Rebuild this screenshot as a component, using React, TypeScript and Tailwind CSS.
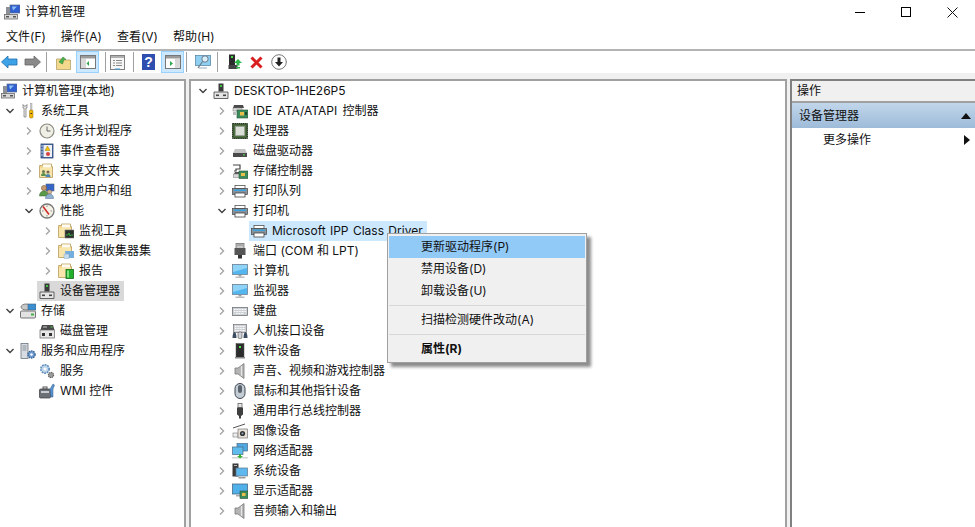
import React from "react";

type IconName =
  | "computer" | "tools" | "clock" | "log" | "share" | "users" | "gauge" | "monitorFolder" | "dataFolder" | "reportFolder"
  | "device" | "storage" | "disk" | "services" | "gears" | "wmi" | "ide" | "cpu" | "drive" | "storageCtl" | "printer"
  | "port" | "screen" | "keyboard" | "hid" | "software" | "speaker" | "mouse" | "usb" | "camera" | "network" | "system" | "display";

function Icon({ name }: { name: IconName }) {
  return (
    <svg width="16" height="16" viewBox="0 0 16 16" className="shrink-0">
      {drawIcon(name)}
    </svg>
  );
}

function Folder({ children }: { children?: React.ReactNode }) {
  return (
    <>
      <path d="M.5 3.5V2.500h3V1h9v2.500h1v11H.5z" fill="#f3d78f" stroke="#b89c60" strokeWidth=".8" />
      <path d="M4 1.500h8v3H4z" fill="#fdfbf2" />
      <path d="M1 5h12v9H1z" fill="#f8e6ac" />
      {children}
    </>
  );
}

function drawIcon(name: IconName) {
  switch (name) {
    case "computer":
      return (
        <>
          <rect x="6" y="1" width="10" height="8" fill="#2f5fd0" stroke="#5b6b8a" strokeWidth=".7" />
          <path d="M8 2.500l5 0-4 4z" fill="#8fc0f2" />
          <rect x="2" y="3" width="4" height="8" fill="#8a8f98" />
          <rect x=".5" y="10.500" width="13" height="4.500" fill="#d8d8d8" stroke="#6a6a6a" strokeWidth=".8" />
          <rect x="2" y="12" width="3" height="1.500" fill="#555" />
          <rect x="9" y="12" width="3" height="1.500" fill="#555" />
        </>
      );
    case "tools":
      return (
        <>
          <path d="M3 1.500v3.500h1v9h2v-9h1v-3.500l-1 1.500h-2z" fill="#e9e9e9" stroke="#777" strokeWidth=".7" />
          <rect x="10.500" y=".5" width="1.500" height="7" fill="#cfcfcf" stroke="#888" strokeWidth=".4" />
          <rect x="9.500" y="7" width="3.500" height="8" rx="1.200" fill="#f2b705" stroke="#8a6a00" strokeWidth=".5" />
          <rect x="10.500" y="10" width="1.500" height="1" fill="#333" />
        </>
      );
    case "clock":
      return (
        <>
          <circle cx="8" cy="8" r="7" fill="#efefe6" stroke="#8a8a80" strokeWidth="1.200" />
          <path d="M8 3.500V8h3.500" fill="none" stroke="#666" strokeWidth="1" />
        </>
      );
    case "log":
      return (
        <>
          <rect x="2" y="1" width="12" height="14" fill="#4a6fa8" stroke="#2c4470" strokeWidth=".8" />
          <rect x="4.500" y="2" width="8.500" height="12" fill="#eef0f4" />
          <path d="M8.500 3l2.500 4.500H6z" fill="#f2c200" stroke="#8a7000" strokeWidth=".4" />
          <circle cx="9" cy="11" r="2" fill="#d84040" />
          <path d="M2 3h2M2 6h2M2 9h2M2 12h2" stroke="#dfe6f0" strokeWidth=".8" />
        </>
      );
    case "share":
      return (
        <Folder>
          <circle cx="4.500" cy="8.500" r="1.600" fill="#6f7f55" />
          <path d="M2 13c0-2 1-3 2.500-3s2.500 1 2.500 3z" fill="#5f8f4f" />
          <circle cx="9" cy="9" r="1.600" fill="#7a6a55" />
          <path d="M6.500 14c0-2 1-3 2.500-3s2.500 1 2.500 3z" fill="#4f86b8" />
        </Folder>
      );
    case "users":
      return (
        <>
          <rect x="7" y="1" width="8" height="7" fill="#3565c8" stroke="#506080" strokeWidth=".6" />
          <circle cx="5" cy="5" r="2.600" fill="#c99a70" stroke="#6a4a30" strokeWidth=".5" />
          <path d="M.5 13c0-3.500 2-5 4.500-5s4.500 1.500 4.500 5z" fill="#5a9a48" stroke="#3a6a30" strokeWidth=".5" />
          <circle cx="10.500" cy="9" r="2.200" fill="#d0b090" stroke="#6a4a30" strokeWidth=".4" />
          <path d="M6.500 15.500c0-3 1.500-4.500 4-4.500s4 1.500 4 4.500z" fill="#8fb0d0" stroke="#50708f" strokeWidth=".5" />
        </>
      );
    case "gauge":
      return (
        <>
          <circle cx="8" cy="8" r="7" fill="#f4f1e6" stroke="#777" strokeWidth="1.300" />
          <path d="M4 3.500l6 8" stroke="#d02a2a" strokeWidth="1.500" />
          <path d="M8 2.500v1.500M13 8h-1.500M3 8h1.500M8 12v1.500" stroke="#777" strokeWidth=".8" />
        </>
      );
    case "monitorFolder":
      return (
        <Folder>
          <rect x="7" y="7" width="9" height="8" fill="#2b2f2a" stroke="#777" strokeWidth=".6" />
          <path d="M8 12h2l1-2 1 3 1-1h2" fill="none" stroke="#3fc04a" strokeWidth=".8" />
        </Folder>
      );
    case "dataFolder":
      return (
        <Folder>
          <path d="M7 8h9v7H8z" fill="#74aede" />
          <path d="M6 11h5v4.500H6z" fill="#c4dcf0" stroke="#7a9ab8" strokeWidth=".4" />
        </Folder>
      );
    case "reportFolder":
      return (
        <Folder>
          <rect x="8" y="6.500" width="7.500" height="9" fill="#22b02c" stroke="#136a18" strokeWidth=".8" />
          <rect x="9" y="7.500" width="2" height="7" fill="#7fe07f" />
        </Folder>
      );
    case "device":
      return (
        <>
          <rect x="5.500" y=".5" width="5" height="8" fill="#3a3a3a" />
          <rect x="7" y="2" width="2" height="2" fill="#43c043" />
          <path d="M1 9h14v6.500H1z" fill="#e4e4e4" stroke="#555" strokeWidth=".9" />
          <rect x="3" y="11.500" width="3" height="1.600" fill="#444" />
          <rect x="10" y="11.500" width="3" height="1.600" fill="#444" />
        </>
      );
    case "storage":
      return (
        <>
          <ellipse cx="6" cy="4" rx="5" ry="3" fill="#c8c8c8" stroke="#666" strokeWidth=".8" />
          <rect x="8" y="1" width="8" height="6" fill="#3a8fd0" stroke="#46627a" strokeWidth=".6" />
          <rect x=".5" y="8" width="15" height="7" rx="1" fill="#e2e2e2" stroke="#666" strokeWidth=".9" />
          <rect x="11" y="10.500" width="3" height="2" fill="#46b246" />
        </>
      );
    case "disk":
      return (
        <>
          <path d="M3 2h11l1.500 5H1.500z" fill="#4a4a4a" />
          <path d="M4 3h4v2H4z" fill="#8a8a8a" />
          <rect x="11.500" y="3.500" width="2" height="1" fill="#52d052" />
          <rect x="1" y="7" width="14.500" height="8" fill="#e8e8e8" stroke="#666" strokeWidth=".7" />
          <rect x="3" y="10" width="3" height="3" fill="#333" />
          <rect x="10" y="10" width="3" height="3" fill="#333" />
        </>
      );
    case "services":
      return (
        <>
          <rect x="1" y=".5" width="7" height="15" fill="#d7dce2" stroke="#6b7480" strokeWidth=".8" />
          <path d="M2.500 3h4M2.500 5h4M2.500 7h4" stroke="#6b7480" strokeWidth=".7" />
          <circle cx="11.500" cy="11.500" r="3.600" fill="#6a9ad0" stroke="#3a5f8c" strokeWidth="1.300" strokeDasharray="1.500 .8" />
          <circle cx="11.500" cy="11.500" r="1.200" fill="#fff" />
        </>
      );
    case "gears":
      return (
        <>
          <circle cx="6" cy="6" r="4.200" fill="#bcd4ea" stroke="#5a8ab8" strokeWidth="1.600" strokeDasharray="1.800 .9" />
          <circle cx="6" cy="6" r="1.600" fill="#fff" />
          <circle cx="12" cy="12" r="2.600" fill="#9a9a9a" stroke="#5e5e5e" strokeWidth="1.200" strokeDasharray="1.300 .7" />
        </>
      );
    case "wmi":
      return (
        <>
          <rect x=".5" y="6" width="11" height="9" rx="1" fill="#6a6f76" stroke="#3a3d42" strokeWidth=".7" />
          <rect x="2" y="8" width="8" height="2" fill="#c8ccd0" />
          <rect x="4" y="4" width="4" height="2" fill="none" stroke="#555" />
          <path d="M11 6l3-5 1.500 1-1.500 4v8h-2z" fill="#5a94d0" stroke="#2e5a8a" strokeWidth=".5" />
        </>
      );
    case "ide":
      return (
        <>
          <path d="M2 2h9l1 3H1z" fill="#4a4a4a" />
          <rect x="1" y="5" width="9" height="3" fill="#dcdcdc" stroke="#777" strokeWidth=".5" />
          <rect x="5" y="7" width="11" height="8" fill="#3d8a5a" stroke="#25583a" strokeWidth=".6" />
          <rect x="8" y="9" width="4" height="3.500" fill="#e8c04a" />
          <rect x="13" y="9" width="2" height="3" fill="#1f4a30" />
          <rect x="1" y="9" width="3" height="3" fill="#bbb" />
        </>
      );
    case "cpu":
      return (
        <>
          <rect x=".5" y=".5" width="15" height="15" fill="#3f5a34" stroke="#26351f" strokeWidth="1" strokeDasharray="1.500 .6" />
          <rect x="2" y="2" width="12" height="12" fill="#4f7040" />
          <rect x="3.500" y="3.500" width="9" height="9" fill="#dcdfd8" stroke="#9aa09a" strokeWidth=".6" />
        </>
      );
    case "drive":
      return (
        <>
          <path d="M3 6h10l2 4H1z" fill="#c4c4c4" />
          <rect x="1" y="10" width="14" height="4" fill="#4a4a4a" />
          <rect x="11" y="11.300" width="2" height="1.200" fill="#55cc55" />
        </>
      );
    case "storageCtl":
      return (
        <>
          <path d="M1 2h7v4H4v2H2" fill="none" stroke="#444" strokeWidth="1.200" />
          <path d="M3 9h5l1 2H2z" fill="#555" />
          <rect x="1.500" y="11" width="6" height="3.500" fill="#d8d8d8" stroke="#777" strokeWidth=".5" />
          <rect x="7" y="8" width="9" height="7.500" fill="#3d8a5a" stroke="#25583a" strokeWidth=".6" />
          <rect x="9" y="10" width="4" height="3" fill="#e8c04a" />
        </>
      );
    case "printer":
      return (
        <>
          <rect x="3" y="2.500" width="10" height="3" fill="#fff" stroke="#555" strokeWidth=".8" />
          <rect x=".5" y="5.500" width="15" height="6" fill="#8a929a" stroke="#444" strokeWidth=".7" />
          <rect x="2" y="6.500" width="12" height="1.500" fill="#39a0e0" />
          <rect x="3" y="10" width="10" height="4" fill="#fff" stroke="#444" strokeWidth=".8" />
        </>
      );
    case "port":
      return (
        <>
          <rect x="4" y=".5" width="8" height="5" fill="#c8c8c8" stroke="#666" strokeWidth=".7" />
          <path d="M5.500 2h1M7.500 2h1M9.500 2h1" stroke="#555" />
          <rect x="2.500" y="5" width="11" height="7" fill="#555" />
          <rect x="6" y="12" width="4" height="3.500" fill="#333" />
        </>
      );
    case "screen":
      return (
        <>
          <rect x=".5" y="1.500" width="15" height="10" fill="#53b6ee" stroke="#6f8296" strokeWidth=".8" />
          <path d="M1 2h14v3L1 9z" fill="#8fd3f7" />
          <rect x="6.500" y="12" width="3" height="1.500" fill="#a0a0a0" />
          <rect x="3.500" y="13.500" width="9" height="1.500" fill="#bdbdbd" />
        </>
      );
    case "keyboard":
      return (
        <>
          <rect x=".5" y="4.500" width="15" height="8" fill="#cdd0d4" stroke="#6f7377" strokeWidth=".8" />
          <path d="M2 6.500h12M2 8.500h12M4 10.500h8" stroke="#fff" strokeWidth="1" strokeDasharray="1 .6" />
        </>
      );
    case "hid":
      return (
        <>
          <rect x="1.500" y="1.500" width="13" height="8" fill="#cdd0d4" stroke="#6f7377" strokeWidth=".7" />
          <path d="M3 3.500h10M3 5.500h10M3 7.500h10" stroke="#fff" strokeDasharray="1 .6" />
          <path d="M.5 15c0-4 1-6 2-6s2 2 2 6z" fill="#3a4a5f" />
          <rect x="6" y="9" width="4" height="6.500" rx="1.500" fill="#d0d4d8" stroke="#444" strokeWidth=".6" />
          <path d="M11.500 15c0-4 1-6 2-6s2 2 2 6z" fill="#3a4a5f" />
        </>
      );
    case "software":
      return (
        <>
          <rect x="4" y=".5" width="8" height="14" fill="#2c2c2c" stroke="#555" strokeWidth=".5" />
          <rect x="7" y="3" width="2" height="2" fill="#4be04b" />
          <rect x="3" y="14" width="10" height="1.500" fill="#8a8a8a" />
        </>
      );
    case "speaker":
      return (
        <>
          <path d="M3 5h3L12 .5v15L6 11H3z" fill="#b4b4b4" stroke="#7a7a7a" strokeWidth=".8" />
          <path d="M9.500 3v10" stroke="#e6e6e6" strokeWidth="1.200" />
        </>
      );
    case "mouse":
      return (
        <>
          <rect x="3" y=".5" width="10" height="15" rx="5" fill="#c4ccd4" stroke="#3c4650" strokeWidth="1" />
          <rect x="6" y="2" width="4" height="8" rx="2" fill="#5a646e" />
        </>
      );
    case "usb":
      return (
        <>
          <rect x="6" y=".5" width="4" height="4" fill="#e6e6e6" stroke="#555" strokeWidth=".7" />
          <path d="M5 4.500h6v7L9 13v2.500H7V13l-2-1.500z" fill="#3f3f3f" />
        </>
      );
    case "camera":
      return (
        <>
          <path d="M1 5L13 1" stroke="#555" strokeWidth="1" />
          <rect x="1" y="10" width="5" height="4" fill="#eee" stroke="#777" strokeWidth=".6" />
          <rect x="6" y="6" width="9.500" height="9" fill="#e8e2d8" stroke="#777" strokeWidth=".7" />
          <circle cx="10.500" cy="10.500" r="2.600" fill="#333" />
          <circle cx="10.500" cy="10.500" r="1" fill="#9ab" />
        </>
      );
    case "network":
      return (
        <>
          <rect x="5" y=".5" width="10.500" height="7.500" fill="#4fa8e0" stroke="#4a6a86" strokeWidth=".7" />
          <rect x=".5" y="4" width="10.500" height="7.500" fill="#60bcec" stroke="#4a6a86" strokeWidth=".7" />
          <path d="M0 14h16v1.500H0z" fill="#d4d4d4" />
          <path d="M8 11v3" stroke="#38b038" strokeWidth="2" />
          <path d="M5 13h6l-3 2.500z" fill="#38b038" />
        </>
      );
    case "system":
      return (
        <>
          <rect x=".5" y=".5" width="6" height="13" fill="#3a3a3a" />
          <rect x="2" y="2" width="3" height="1" fill="#bbb" />
          <rect x="4" y="5" width="11.500" height="8" fill="#5cb8ee" stroke="#5e7488" strokeWidth=".7" />
          <rect x="6.500" y="14" width="7" height="1.500" fill="#9a9a9a" />
        </>
      );
    case "display":
      return (
        <>
          <rect x=".5" y="1" width="15" height="10" fill="#50b0ea" stroke="#4a6a86" strokeWidth=".8" />
          <rect x="4" y="12" width="6" height="1.500" fill="#aaa" />
          <rect x="8" y="8" width="8" height="7.500" fill="#3d8a5a" stroke="#25583a" strokeWidth=".6" />
          <rect x="10" y="10" width="3.500" height="3" fill="#e8c04a" />
        </>
      );
  }
}

function Chevron({ open }: { open?: boolean }) {
  return (
    <svg width="10" height="10" viewBox="0 0 10 10" className="shrink-0">
      {open ? (
        <path d="M1.500 3l3.500 3.500L8.500 3" fill="none" stroke="#404040" strokeWidth="1.400" />
      ) : (
        <path d="M3 1.500L6.500 5 3 8.500" fill="none" stroke="#a6a6a6" strokeWidth="1.400" />
      )}
    </svg>
  );
}

type Node = { label: string; icon: IconName; level: number; chevron?: "open" | "closed"; selected?: boolean; spacing?: string };

const leftTree: Node[] = [
  { label: "计算机管理(本地)", icon: "computer", level: 0 },
  { label: "系统工具", icon: "tools", level: 0, chevron: "open" },
  { label: "任务计划程序", icon: "clock", level: 1, chevron: "closed" },
  { label: "事件查看器", icon: "log", level: 1, chevron: "closed" },
  { label: "共享文件夹", icon: "share", level: 1, chevron: "closed" },
  { label: "本地用户和组", icon: "users", level: 1, chevron: "closed" },
  { label: "性能", icon: "gauge", level: 1, chevron: "open" },
  { label: "监视工具", icon: "monitorFolder", level: 2, chevron: "closed" },
  { label: "数据收集器集", icon: "dataFolder", level: 2, chevron: "closed" },
  { label: "报告", icon: "reportFolder", level: 2, chevron: "closed" },
  { label: "设备管理器", icon: "device", level: 1, selected: true },
  { label: "存储", icon: "storage", level: 0, chevron: "open" },
  { label: "磁盘管理", icon: "disk", level: 1 },
  { label: "服务和应用程序", icon: "services", level: 0, chevron: "open" },
  { label: "服务", icon: "gears", level: 1 },
  { label: "WMI 控件", icon: "wmi", level: 1 },
];

const centerTree: Node[] = [
  { label: "DESKTOP-1HE26P5", icon: "device", level: 0, chevron: "open" },
  { label: "IDE ATA/ATAPI 控制器", icon: "ide", level: 1, chevron: "closed", spacing: "[word-spacing:2px]" },
  { label: "处理器", icon: "cpu", level: 1, chevron: "closed" },
  { label: "磁盘驱动器", icon: "drive", level: 1, chevron: "closed" },
  { label: "存储控制器", icon: "storageCtl", level: 1, chevron: "closed" },
  { label: "打印队列", icon: "printer", level: 1, chevron: "closed" },
  { label: "打印机", icon: "printer", level: 1, chevron: "open" },
  { label: "Microsoft IPP Class Driver", icon: "printer", level: 2, selected: true, spacing: "[word-spacing:1px]" },
  { label: "端口 (COM 和 LPT)", icon: "port", level: 1, chevron: "closed" },
  { label: "计算机", icon: "screen", level: 1, chevron: "closed" },
  { label: "监视器", icon: "screen", level: 1, chevron: "closed" },
  { label: "键盘", icon: "keyboard", level: 1, chevron: "closed" },
  { label: "人机接口设备", icon: "hid", level: 1, chevron: "closed" },
  { label: "软件设备", icon: "software", level: 1, chevron: "closed" },
  { label: "声音、视频和游戏控制器", icon: "speaker", level: 1, chevron: "closed" },
  { label: "鼠标和其他指针设备", icon: "mouse", level: 1, chevron: "closed" },
  { label: "通用串行总线控制器", icon: "usb", level: 1, chevron: "closed" },
  { label: "图像设备", icon: "camera", level: 1, chevron: "closed" },
  { label: "网络适配器", icon: "network", level: 1, chevron: "closed" },
  { label: "系统设备", icon: "system", level: 1, chevron: "closed" },
  { label: "显示适配器", icon: "display", level: 1, chevron: "closed" },
  { label: "音频输入和输出", icon: "speaker", level: 1, chevron: "closed" },
];

const levelPad = ["pl-0", "pl-[19px]", "pl-[38px]"];

function TreeRow({ node, selectedBg, offset }: { node: Node; selectedBg: string; offset: string }) {
  return (
    <div className={`flex h-5 items-center ${offset}`}>
      <div className={levelPad[node.level]}>
        <div className="flex items-center">
          <div className="flex w-[21px] shrink-0 justify-center">
            {node.chevron && <Chevron open={node.chevron === "open"} />}
          </div>
          <div className={`flex h-5 items-center gap-[5px] ${node.selected ? `-ml-[2px] pl-[2px] pr-[4px] ${selectedBg}` : ""}`}>
            <Icon name={node.icon} />
            <span className={`whitespace-nowrap ${node.spacing ?? ""}`}>{node.label}</span>
          </div>
        </div>
      </div>
    </div>
  );
}

function ToolButton({ active, children, className }: { active?: boolean; children: React.ReactNode; className: string }) {
  return (
    <div className={`flex h-[22px] items-center justify-center ${active ? "border border-[#99d1ff] bg-[#cce8ff]" : ""} ${className}`}>
      {children}
    </div>
  );
}

function Sep({ className }: { className: string }) {
  return <div className={`h-[20px] w-px bg-[#a0a0a0] ${className}`} />;
}

function Toolbar() {
  return (
    <div className="flex h-[24px] items-center border-t-2 border-[#b4b4b4] bg-white">
      <ToolButton className="ml-[1px] w-[17px]">
        <svg width="17" height="14" viewBox="0 0 17 14">
          <path d="M.5 7L7 1v3h9v6H7v3z" fill="#3ea3e6" stroke="#1f6fae" strokeWidth=".8" />
        </svg>
      </ToolButton>
      <ToolButton className="ml-[6px] w-[17px]">
        <svg width="17" height="14" viewBox="0 0 17 14">
          <path d="M16.500 7L10 1v3H1v6h9v3z" fill="#8a8a8a" stroke="#666" strokeWidth=".8" />
        </svg>
      </ToolButton>
      <Sep className="ml-[5px]" />
      <ToolButton className="ml-[9px] w-[15px]">
        <svg width="15" height="15" viewBox="0 0 15 15">
          <path d="M.5 4h5l1 1h8v9.500H.5z" fill="#f3d98c" stroke="#b0965a" strokeWidth=".7" />
          <path d="M3 7l4-5 3 2.500H8L6.500 9z" fill="#4cb04c" stroke="#2c7a2c" strokeWidth=".5" />
        </svg>
      </ToolButton>
      <ToolButton active className="ml-[5px] w-[23px]">
        <svg width="16" height="14" viewBox="0 0 16 14">
          <rect x=".5" y=".5" width="15" height="13" fill="#fff" stroke="#777" />
          <rect x="1" y="1" width="14" height="2.500" fill="#9a9a9a" />
          <rect x="1" y="4" width="5" height="9" fill="#d8d8d8" />
          <path d="M9 6v5L6.500 8.500z" fill="#2fa84a" />
        </svg>
      </ToolButton>
      <Sep className="ml-[6px]" />
      <ToolButton className="ml-[4px] w-[15px]">
        <svg width="15" height="15" viewBox="0 0 15 15">
          <rect x=".5" y=".5" width="14" height="14" fill="#f6f6f6" stroke="#808080" />
          <rect x="1" y="1" width="13" height="2" fill="#b0b0b0" />
          <path d="M3 5.500h2M6 5.500h6M3 8h2M6 8h6M3 10.500h2M6 10.500h6" stroke="#8a8a8a" />
          <rect x="5" y="13.500" width="5" height="1" fill="#3aa0e0" />
        </svg>
      </ToolButton>
      <Sep className="ml-[8px]" />
      <ToolButton className="ml-[8px] w-[13px]">
        <div className="flex h-[16px] w-[13px] items-center justify-center bg-[#2f4fb0] font-['Liberation_Sans',sans-serif] text-[14px] font-bold leading-none text-white">?</div>
      </ToolButton>
      <ToolButton active className="ml-[6px] w-[23px]">
        <svg width="16" height="14" viewBox="0 0 16 14">
          <rect x=".5" y=".5" width="15" height="13" fill="#fff" stroke="#777" />
          <rect x="1" y="1" width="14" height="2.500" fill="#9a9a9a" />
          <rect x="10" y="4" width="5" height="9" fill="#d8d8d8" />
          <path d="M5 6v5l3-2.500z" fill="#2fa84a" />
        </svg>
      </ToolButton>
      <Sep className="ml-[2px]" />
      <ToolButton className="ml-[8px] w-[16px]">
        <svg width="16" height="16" viewBox="0 0 16 16">
          <rect x=".5" y="1.500" width="15" height="10" fill="#8fd0f2" stroke="#5a8aa8" strokeWidth=".8" />
          <rect x="4" y="13.500" width="8" height="1" fill="#9ab" />
          <circle cx="10" cy="5" r="3.200" fill="#d8eefa" stroke="#6a7a88" />
          <path d="M7.500 7.500L3 14" stroke="#6a7a88" strokeWidth="1.200" />
        </svg>
      </ToolButton>
      <Sep className="ml-[6px]" />
      <ToolButton className="ml-[10px] w-[14px]">
        <svg width="14" height="16" viewBox="0 0 14 16">
          <rect x="1" y=".5" width="6" height="11" fill="#2c2c2c" />
          <rect x="3" y="2" width="2" height="2" fill="#4be04b" />
          <rect x=".5" y="11" width="9" height="4" fill="#444" />
          <path d="M10 5l4 4h-2.500v2.500h-3V9H6z" fill="#2fb84a" />
          <rect x="8" y="13" width="4" height="1.500" fill="#2fb84a" />
        </svg>
      </ToolButton>
      <ToolButton className="ml-[8px] w-[13px]">
        <svg width="13" height="13" viewBox="0 0 13 13">
          <path d="M1.500 1.500l10 10M11.500 1.500l-10 10" stroke="#d81e1e" strokeWidth="3" />
        </svg>
      </ToolButton>
      <ToolButton className="ml-[8px] w-[16px]">
        <svg width="16" height="16" viewBox="0 0 16 16">
          <circle cx="8" cy="8" r="7.300" fill="#fff" stroke="#777" />
          <path d="M6.500 3.500h3V8H12l-4 4.500L4 8h2.500z" fill="#222" />
        </svg>
      </ToolButton>
    </div>
  );
}

function MenuItem({ label, active, bold }: { label: string; active?: boolean; bold?: boolean }) {
  return (
    <div className={`flex h-[22px] items-center pl-[32px] ${active ? "bg-[#91c9f7]" : ""} ${bold ? "font-bold" : ""}`}>
      {label}
    </div>
  );
}

export default function App() {
  return (
    <div className="relative flex h-[527px] w-[975px] flex-col overflow-hidden bg-white font-['Inter','Noto_Sans_CJK_SC',sans-serif] text-[12px] leading-5 text-[#111]">
      <div className="flex h-[24px] items-center justify-between">
        <div className="flex items-center gap-[5px] pl-[4px]">
          <Icon name="computer" />
          <span>计算机管理</span>
        </div>
        <div className="flex items-center">
          <div className="flex w-[46px] justify-center">
            <div className="h-px w-[10px] bg-black" />
          </div>
          <div className="flex w-[46px] justify-center">
            <div className="h-[10px] w-[10px] border border-black" />
          </div>
          <div className="flex w-[46px] justify-center">
            <svg width="11" height="11" viewBox="0 0 11 11">
              <path d="M.5 .5l10 10M10.500 .5l-10 10" stroke="#111" />
            </svg>
          </div>
        </div>
      </div>
      <div className="flex h-[25px] items-center gap-[15px] pl-[6px]">
        <span>文件(F)</span>
        <span>操作(A)</span>
        <span>查看(V)</span>
        <span>帮助(H)</span>
      </div>
      <Toolbar />
      <div className="flex min-h-0 flex-1 gap-[3px] bg-[#f0f0f0] pt-[6px]">
        <div className="w-[186px] shrink-0 border-t-2 border-r-2 border-[#a0a0a0] bg-white">
          {leftTree.map((n, i) => (
            <TreeRow key={n.label} node={n} selectedBg="bg-[#d9d9d9]" offset={i === 0 ? "-ml-[20px]" : "-ml-[1px]"} />
          ))}
        </div>
        <div className="w-[598px] shrink-0 border-t-2 border-l-2 border-r-2 border-[#a0a0a0] bg-white">
          {centerTree.map((n) => (
            <TreeRow key={n.label} node={n} selectedBg="bg-[#cce8ff]" offset="pl-[1px]" />
          ))}
        </div>
        <div className="flex-1 border-t-2 border-l-2 border-[#808080] bg-white">
          <div className="flex h-[22px] items-center border-b-2 border-[#a0a0a0] bg-[#f0f0f0] pl-[5px]">操作</div>
          <div className="flex h-[25px] items-center justify-between bg-gradient-to-b from-[#c2d6ea] to-[#9dbbd9] pl-[7px] pr-[4px]">
            <span>设备管理器</span>
            <svg width="10" height="6" viewBox="0 0 10 6">
              <path d="M0 6L5 0l5 6z" fill="#111" />
            </svg>
          </div>
          <div className="flex h-[24px] items-center justify-between pl-[31px] pr-[5px]">
            <span>更多操作</span>
            <svg width="6" height="10" viewBox="0 0 6 10">
              <path d="M0 0l6 5-6 5z" fill="#111" />
            </svg>
          </div>
        </div>
      </div>
      <div className="absolute left-[387px] top-[233px] h-[130px] w-[200px] border border-[#a0a0a0] bg-[#f0f0f0] px-[1px] pt-[2px] shadow-[4px_4px_3px_rgba(0,0,0,0.45)]">
        <MenuItem label="更新驱动程序(P)" active />
        <MenuItem label="禁用设备(D)" />
        <MenuItem label="卸载设备(U)" />
        <div className="my-[3px] h-px bg-[#d7d7d7]" />
        <MenuItem label="扫描检测硬件改动(A)" />
        <div className="my-[3px] h-px bg-[#d7d7d7]" />
        <MenuItem label="属性(R)" bold />
      </div>
    </div>
  );
}
